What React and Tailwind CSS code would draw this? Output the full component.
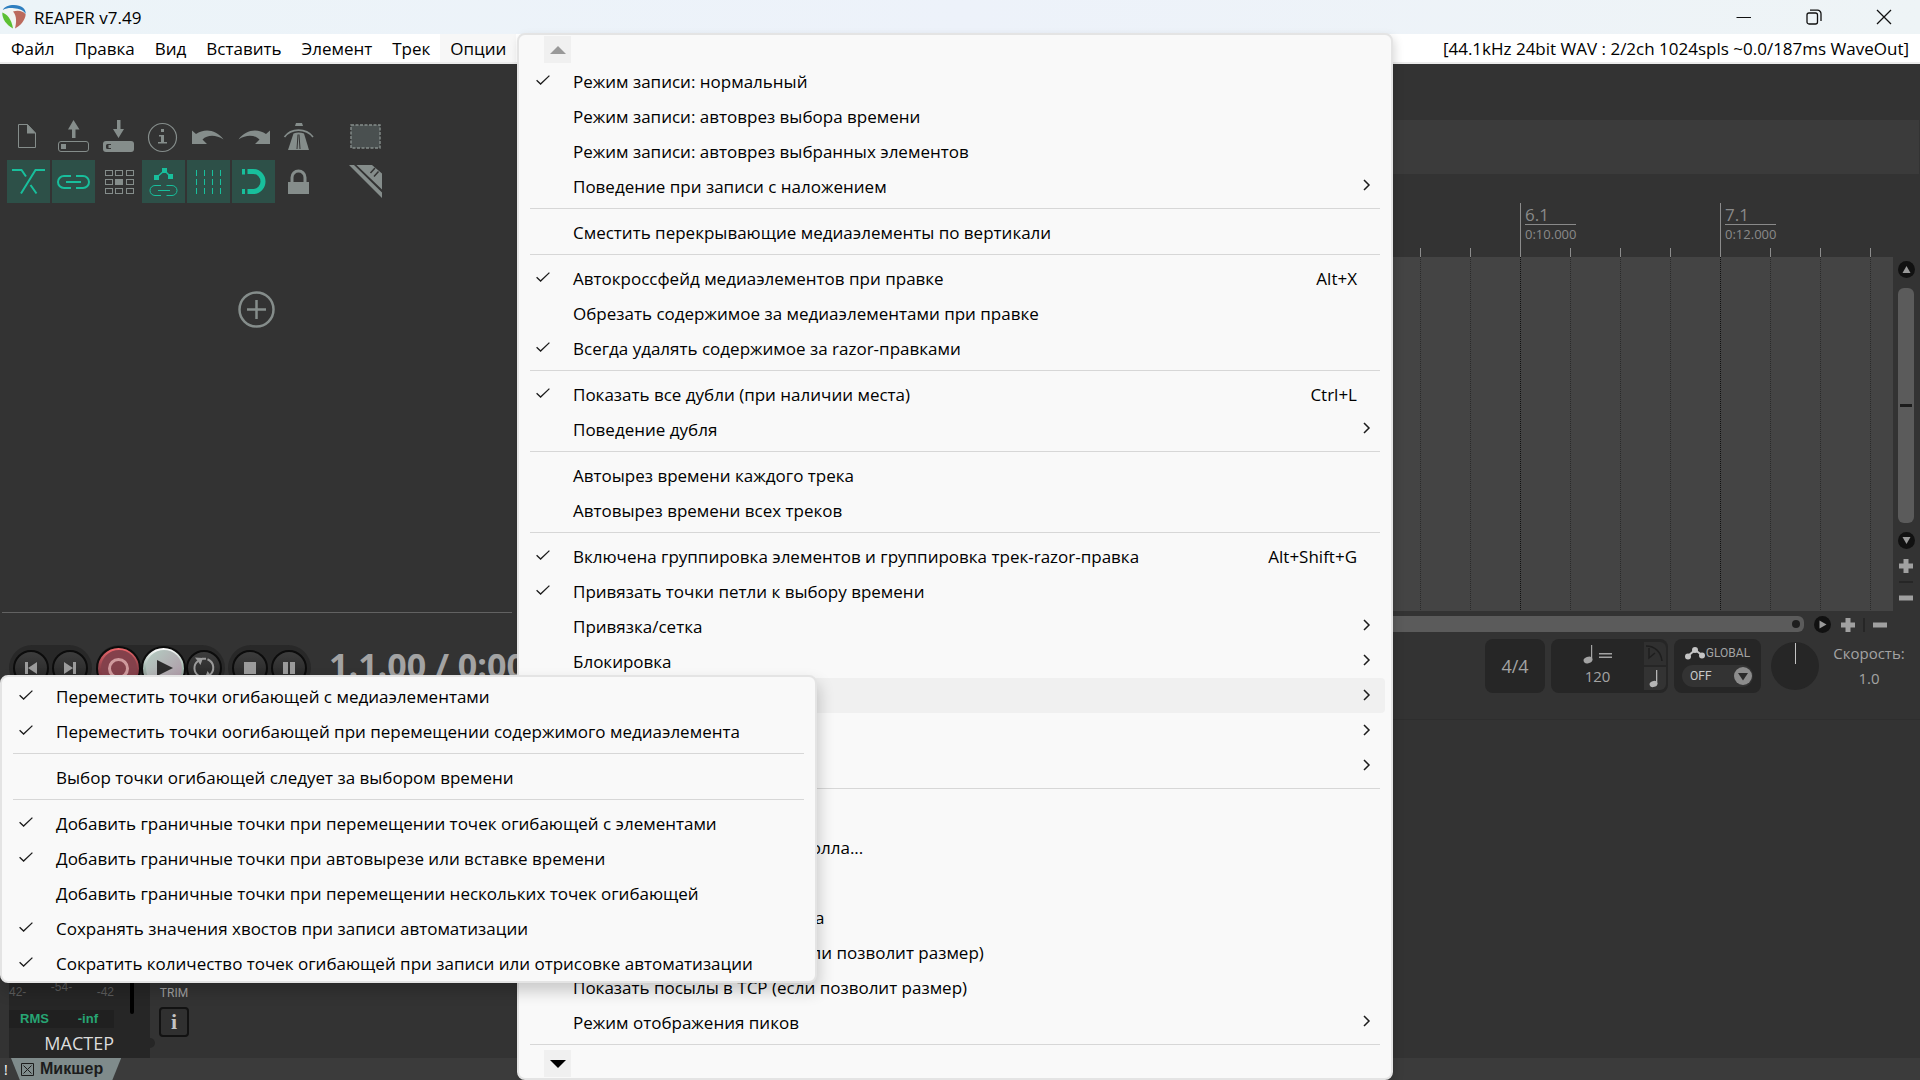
import React from "react";

const UI = "font-['Open_Sans','Noto_Sans',sans-serif]";

/* ---------- toolbar drawings (43 x 43 grid) ---------- */

const Glyph = ({ children }) => (
  <svg viewBox="0 0 43 43" className="size-[43px]" fill="none" stroke="currentColor" aria-hidden="true">
    {children}
  </svg>
);

const undoPath = "M5 15.500L9 19C17 13.500 29 14 36.500 24.500C29 19.500 20.500 19.500 15.500 24.500L20 29H5Z";
const linkHalves = "M19 16H12a6 6 0 0 0 0 12H19M24 16H31a6 6 0 0 1 0 12H24";

const toolbarTop = [
  { name: "Новый проект", art: (
    <Glyph>
      <path d="M11.500 9.500H20.500L28.500 18V32.500H11.500Z" />
      <path d="M20 9L29 18.500H20Z" fill="currentColor" stroke="none" />
    </Glyph>
  ) },
  { name: "Открыть проект", art: (
    <Glyph>
      <path d="M21.500 5L27.500 14.500H23.500V23H20V14.500H16Z" fill="currentColor" stroke="none" />
      <rect x="6.500" y="26.500" width="30" height="10" rx="2.500" />
      <rect x="9" y="29" width="5" height="5" fill="currentColor" stroke="none" />
    </Glyph>
  ) },
  { name: "Сохранить проект", art: (
    <Glyph>
      <path d="M21.500 23L27 14H23.500V5H20V14H16Z" fill="currentColor" stroke="none" />
      <rect x="6" y="26" width="31" height="11" rx="3" fill="currentColor" stroke="none" />
      <path d="M14 29H10.500Q9 29 9 30.500V32.500Q9 34 10.500 34H14V33H11.500V30H14Z" fill="#333" stroke="none" />
    </Glyph>
  ) },
  { name: "Настройки проекта", art: (
    <Glyph>
      <circle cx="20.500" cy="22.500" r="14" strokeWidth="1.200" />
      <path d="M19 14h3v3h-3zM17 20h5v7h3v1.500h-9V27h3v-5.500h-2z" fill="currentColor" stroke="none" />
    </Glyph>
  ) },
  { name: "Отменить", art: <Glyph><path d={undoPath} fill="currentColor" stroke="none" /></Glyph> },
  { name: "Повторить", art: (
    <Glyph><path d={undoPath} transform="matrix(-1 0 0 1 43 0)" fill="currentColor" stroke="none" /></Glyph>
  ) },
  { name: "Метроном", art: (
    <Glyph>
      <path d="M19 8H25L26 11H18Z" fill="currentColor" stroke="none" />
      <path d="M7.500 22C14 12.800 29 12.800 36 22" strokeWidth="1.600" />
      <path d="M16.500 18.500Q21.500 16.500 27 18.500L32 35H11Z" fill="currentColor" stroke="none" />
      <path d="M21 19.500L20 34M22 19.500L23 34" stroke="#333" />
    </Glyph>
  ) },
];

const toolbarBottom = [
  { name: "Автокроссфейд", on: true, art: (
    <Glyph>
      <path d="M5 10H14.500L19 16.500M23.500 25L29.500 33.500M38 10H28.500L14 33.500" strokeWidth="2" />
    </Glyph>
  ) },
  { name: "Группировка элементов", on: true, art: (
    <Glyph><path d={linkHalves + "M14 22H29"} strokeWidth="2" /></Glyph>
  ) },
  { name: "Ripple-правка", art: (
    <Glyph>
      {[10, 19, 28].map((y) => [8, 18, 29].map((x) => (
        <rect key={x + "-" + y} x={x + 0.5} y={y + 0.5} width="7" height="5" fill={x === 18 && y === 19 ? "currentColor" : "none"} />
      )))}
    </Glyph>
  ) },
  { name: "Перемещать огибающие", on: true, art: (
    <Glyph>
      <path d="M14.500 17.500L22.500 10.500L28.500 16.500" strokeWidth="1.500" />
      <path d="M12 15h5v5h-5zM20 8h5v5h-5zM26 14h5v5h-5z" fill="currentColor" stroke="none" />
      <path d="M19 25.500H13a5 5 0 0 0 0 10H19M24.500 25.500H30a5 5 0 0 1 0 10H24.500M16 30.500H28" />
    </Glyph>
  ) },
  { name: "Сетка", on: true, art: (
    <Glyph>
      <path d="M9.500 10v24M17.500 10v24M25.500 10v24M33.500 10v24" strokeDasharray="6 3" />
    </Glyph>
  ) },
  { name: "Привязка", on: true, art: (
    <Glyph>
      <path d="M10 9h3v5.500h-3zM10 29h3v5h-3z" fill="currentColor" stroke="none" />
      <path d="M15.500 11.500H21.500a9.500 10 0 0 1 0 20H15.500" strokeWidth="5" />
    </Glyph>
  ) },
  { name: "Блокировка", art: (
    <Glyph>
      <rect x="11" y="22" width="21" height="12" fill="currentColor" stroke="none" />
      <path d="M15 22V17.500a6.500 6.500 0 0 1 13 0V22" strokeWidth="3" />
    </Glyph>
  ) },
];

const marqueeTool = (
  <Glyph>
    <rect x="7" y="10" width="29" height="23" fill="#4a5050" strokeDasharray="3 1.500" strokeWidth="1.400" />
  </Glyph>
);

const razorTool = (
  <Glyph>
    <path d="M5 5H10L38 32.500V38ZM12.500 5H28L38 13.500V29.500Z" fill="currentColor" stroke="none" />
    <path d="M26.500 13L31 8M30 16.500L34.500 11.500" stroke="#333" strokeWidth="1.500" />
  </Glyph>
);

const ToolButton = ({ name, on, children }) => (
  <button
    type="button"
    aria-label={name}
    aria-pressed={!!on}
    className={on ? "size-[43px] bg-[#2d5048] text-[#18bf9c]" : "size-[43px] text-[#858d8b]"}
  >
    {children}
  </button>
);

/* ---------- menus ---------- */

const mainMenu = [
  { t: "Режим записи: нормальный", c: true },
  { t: "Режим записи: автоврез выбора времени" },
  { t: "Режим записи: автоврез выбранных элементов" },
  { t: "Поведение при записи с наложением", sub: true },
  null,
  { t: "Сместить перекрывающие медиаэлементы по вертикали" },
  null,
  { t: "Автокроссфейд медиаэлементов при правке", c: true, k: "Alt+X" },
  { t: "Обрезать содержимое за медиаэлементами при правке" },
  { t: "Всегда удалять содержимое за razor-правками", c: true },
  null,
  { t: "Показать все дубли (при наличии места)", c: true, k: "Ctrl+L" },
  { t: "Поведение дубля", sub: true },
  null,
  { t: "Автоырез времени каждого трека" },
  { t: "Автовырез времени всех треков" },
  null,
  { t: "Включена группировка элементов и группировка трек-razor-правка", c: true, k: "Alt+Shift+G" },
  { t: "Привязать точки петли к выбору времени", c: true },
  { t: "Привязка/сетка", sub: true },
  { t: "Блокировка", sub: true },
  { label: "Точки огибающей", sub: true, open: true },
  { label: "Автоматизация", sub: true },
  { label: "Метроном", sub: true },
  null,
  { label: "Автоскролл" },
  { t: "Параметры полного автоскролла..." },
  { label: "Плавный поиск" },
  { t: "Сделать направляющие трека" },
  { t: "Показать элементы в TCP (если позволит размер)" },
  { t: "Показать посылы в TCP (если позволит размер)" },
  { t: "Режим отображения пиков", sub: true },
  null,
];

const envelopeMenu = [
  { t: "Переместить точки огибающей с медиаэлементами", c: true },
  { t: "Переместить точки оогибающей при перемещении содержимого медиаэлемента", c: true },
  null,
  { t: "Выбор точки огибающей следует за выбором времени" },
  null,
  { t: "Добавить граничные точки при перемещении точек огибающей с элементами", c: true },
  { t: "Добавить граничные точки при автовырезе или вставке времени", c: true },
  { t: "Добавить граничные точки при перемещении нескольких точек огибающей" },
  { t: "Сохранять значения хвостов при записи автоматизации", c: true },
  { t: "Сократить количество точек огибающей при записи или отрисовке автоматизации", c: true },
];

const Check = () => (
  <svg viewBox="0 0 14 10" className="h-[10px] w-[14px]" fill="none" stroke="#1c1c1c" strokeWidth="1.300" aria-hidden="true">
    <path d="M0.600 5.200L4.600 9L13.400 0.600" />
  </svg>
);

const Chevron = () => (
  <svg viewBox="0 0 8 12" className="h-[12px] w-[8px]" fill="none" stroke="#1c1c1c" strokeWidth="1.500" aria-hidden="true">
    <path d="M1 1L6 6L1 11" />
  </svg>
);

const MenuList = ({ items }) =>
  items.map((it, i) =>
    it === null ? (
      <div key={i} role="separator" className="mx-[11px] flex h-[11px] items-center">
        <span className="h-px w-full bg-[#d7d7d7]" />
      </div>
    ) : (
      <button
        key={i}
        type="button"
        role={it.c ? "menuitemcheckbox" : "menuitem"}
        aria-checked={it.c}
        aria-label={it.label}
        className={
          it.open
            ? "mx-1.5 flex h-[35px] items-center rounded bg-[#f0f0f0] pr-[14px] pl-[11px] text-left"
            : "mx-1.5 flex h-[35px] items-center pr-[14px] pl-[11px] text-left"
        }
      >
        <span className="flex h-full w-[37px] shrink-0 items-start pt-3">{it.c && <Check />}</span>
        <span className="flex-1 pt-0.5 whitespace-nowrap">{it.t}</span>
        {it.k && <span className="pt-0.5 pr-[14px] whitespace-nowrap">{it.k}</span>}
        {it.sub && <span className="flex h-full items-start pt-[11px]"><Chevron /></span>}
      </button>
    )
  );

/* ---------- timeline ---------- */

const BEAT = 50;
const ORIGIN = 3;
const beats = Array.from({ length: 28 }, (_, i) => ({ i, x: ORIGIN + i * BEAT, bar: i % 4 === 0 }));
const FIRST_LABELLED_BEAT = 20;

const Ruler = () => (
  <div className="relative h-[83px]">
    <svg className="h-full w-full" shapeRendering="crispEdges" stroke="#8c8c8c" aria-hidden="true">
      {beats.map((b) => (
        <line key={b.i} x1={b.x} x2={b.x} y1={b.bar ? 29 : 74} y2="83" />
      ))}
    </svg>
    {beats.filter((b) => b.bar && b.i >= FIRST_LABELLED_BEAT).map((b) => (
      <div key={b.i} className="absolute top-[32px] text-[#8a8a8a]" style={{ left: b.x + 5 }}>
        <div className="border-b border-[#8a8a8a] text-[17px] leading-[18px]">{b.i / 4 + 1}.1</div>
        <div className="text-[13px] leading-[18px]">0:{String((b.i / 4) * 2).padStart(2, "0")}.000</div>
      </div>
    ))}
  </div>
);

/* ---------- scrollbars ---------- */

const RoundArrow = ({ name, d }) => (
  <button type="button" aria-label={name} className="flex size-[17px] items-center justify-center rounded-full bg-[#111]">
    <svg viewBox="0 0 9 9" className="size-[9px]" fill="#999" aria-hidden="true"><path d={d} /></svg>
  </button>
);

const Zoom = ({ name, plus }) => (
  <button type="button" aria-label={name} className="flex size-[14px] items-center justify-center">
    <svg viewBox="0 0 14 14" className="size-[14px]" stroke="#a0a0a0" strokeWidth="5" aria-hidden="true">
      <path d={plus ? "M0 7H14M7 0V14" : "M0 7H14"} />
    </svg>
  </button>
);

/* ---------- transport ---------- */

const Knob = ({ name, children }) => (
  <button type="button" aria-label={name} className="flex size-[36px] shrink-0 items-center justify-center rounded-full border-2 border-[#0c0c0c] bg-gradient-to-b from-[#3d3d3d] to-[#242424]">
    <svg viewBox="0 0 24 24" className="size-6" fill="#9b9b9b" aria-hidden="true">{children}</svg>
  </button>
);

const Transport = () => (
  <div className="flex h-[80px] items-start text-[#a3a3a3]">
    <div className="mt-[6px] ml-[9px] flex h-[46px] shrink-0 items-center gap-[3px] rounded-full bg-[#282828] px-1">
      <Knob name="В начало"><path d="M6 6h3v12H6zM18 6v12l-9-6z" /></Knob>
      <Knob name="В конец"><path d="M15 6h3v12h-3zM6 6v12l9-6z" /></Knob>
    </div>
    <div className="mt-[6px] ml-1 flex h-[46px] shrink-0 items-center rounded-full bg-[#282828] pr-[3px]">
      <button type="button" aria-label="Запись" className="flex size-[45px] items-center justify-center rounded-full border-2 border-[#0c0c0c] bg-gradient-to-b from-[#f0686c] via-[#8c4049] to-[#6b2f3c]">
        <span className="flex size-[36px] items-center justify-center rounded-full bg-[#84414b]"><span className="size-[21px] rounded-full border-3 border-[#cf9a9d]" /></span>
      </button>
      <button type="button" aria-label="Воспроизведение" className="flex size-[45px] items-center justify-center rounded-full border-2 border-[#0c0c0c] bg-gradient-to-b from-white via-[#9fb5ab] to-[#8d7f87]">
        <span className="flex size-[36px] items-center justify-center rounded-full bg-gradient-to-br from-[#b4cfc3] to-[#ad93a4]">
          <svg viewBox="0 0 16 16" className="ml-[3px] size-4" aria-hidden="true"><path d="M0 0L16 8L0 16Z" fill="#2c2c2c" /></svg>
        </span>
      </button>
      <Knob name="Повтор">
        <path d="M7 20A9 9 0 0 1 6 5M15.500 3.200A9.200 9.200 0 0 1 17 19.500M10 2.800H14" fill="none" stroke="#9b9b9b" strokeWidth="2" />
        <path d="M3 1.500L11 2L8.500 9ZM21 22.500L13 22L15.500 15Z" />
      </Knob>
    </div>
    <div className="mt-[6px] ml-[3px] flex h-[46px] shrink-0 items-center gap-[3px] rounded-full bg-[#282828] px-1">
      <Knob name="Стоп"><path d="M6 6h12v12H6z" /></Knob>
      <Knob name="Пауза"><path d="M6 6h5v12H6zM13 6h5v12h-5z" /></Knob>
    </div>
    <div className="mt-[3px] ml-[18px] text-[34px] leading-[46px] font-bold whitespace-nowrap">1.1.00 / 0:00.000</div>
    <div className="flex-1" />
    <div className="flex items-center gap-1.5 pr-[13px]">
      <button type="button" className="h-[54px] w-[60px] rounded-lg bg-[#262626] text-[18px]">4/4</button>
      <div className="flex h-[54px] w-[117px] rounded-lg bg-[#262626] pr-[2px]">
        <div className="flex flex-1 flex-col items-center pt-[5px]">
          <svg viewBox="0 0 30 20" className="h-[20px] w-[30px]" fill="#a3a3a3" aria-hidden="true">
            <ellipse cx="5" cy="16" rx="4.500" ry="3.200" transform="rotate(-20 5 16)" />
            <path d="M8 1h1.200v15H8zM16 9h13v1.400H16zM16 12.500h13v1.400H16z" />
          </svg>
          <label className="sr-only" htmlFor="bpm">Темп</label>
          <input id="bpm" defaultValue="120" className="w-12 bg-transparent text-center text-[15px] leading-[24px] outline-none" />
        </div>
        <div className="flex w-[22px] flex-col gap-[2px] pt-[3px]">
          <button type="button" aria-label="Огибающая темпа" className="h-[23px] rounded-tr-md bg-[#303030]">
            <svg viewBox="0 0 22 23" className="h-[23px] w-[22px]" fill="none" stroke="#1e1e1e" strokeWidth="1.500" aria-hidden="true"><path d="M2 4C11 4 17 10 18 19M5 6V16L11 11" /></svg>
          </button>
          <button type="button" aria-label="Доля" className="h-[23px] rounded-br-md bg-[#333]">
            <svg viewBox="0 0 22 23" className="h-[23px] w-[22px]" fill="#b5b5b5" aria-hidden="true">
              <ellipse cx="9.500" cy="17" rx="4" ry="3" transform="rotate(-20 9.500 17)" />
              <path d="M12 3h1.300v14H12z" />
            </svg>
          </button>
        </div>
      </div>
      <div className="flex h-[54px] w-[87px] flex-col items-center gap-[3px] rounded-lg bg-[#262626] pt-[5px] font-['Roboto',sans-serif] text-[12px]">
        <div className="flex h-[18px] items-center gap-px">
          <svg viewBox="0 0 20 14" className="h-[14px] w-[20px]" fill="#c4c4c4" stroke="#c4c4c4" strokeWidth="2" aria-hidden="true">
            <path d="M3 10L10 4L17 9" fill="none" />
            <circle cx="3" cy="10.500" r="2" /><circle cx="10" cy="4" r="2" /><circle cx="17" cy="9.500" r="2" />
          </svg>
          GLOBAL
        </div>
        <button type="button" className="flex h-[22px] w-[71px] items-center justify-between rounded-full bg-[#333] pr-px pl-2 text-[#c9c9c9]">
          OFF
          <svg viewBox="0 0 18 18" className="size-[18px]" aria-hidden="true"><circle cx="9" cy="9" r="9" fill="#8c8c8c" /><path d="M4 6H14L9 13.500Z" fill="#2a2a2a" /></svg>
        </button>
      </div>
      <div className="ml-1 flex size-[48px] justify-center rounded-full bg-[#262626] pt-px"><span className="h-[21px] w-px bg-[#c4c4c4]" /></div>
      <div className="ml-1.5 flex w-[76px] flex-col items-center text-[15px] leading-[25px] whitespace-nowrap">
        <span>Скорость:</span>
        <span>1.0</span>
      </div>
    </div>
  </div>
);

/* ---------- mixer ---------- */

const Mixer = () => (
  <section aria-label="Микшер" className="flex h-[339px] border-t border-[#2e2e2e] pl-[9px]">
    <div className="flex w-[141px] flex-col justify-end bg-[#262626]">
      <div className="flex flex-1 items-end font-['Liberation_Sans',sans-serif] text-[12px] leading-[16px] text-[#5c5c5c]">
        <div className="flex w-[105px] items-end justify-between pb-[14px]">
          <span>42-</span><span className="pb-[5px]">-54-</span><span>-42</span>
        </div>
        <span className="ml-4 h-[300px] w-1 rounded-b bg-black" />
      </div>
      <div className="-mt-1 flex h-[18px] w-[105px] items-center justify-between bg-[#202020] pr-4 pl-[11px] font-['Liberation_Sans',sans-serif] text-[13px] font-bold text-[#27a574]">
        <span>RMS</span><span>-inf</span>
      </div>
      <div className="h-[30px] w-[105px] text-right text-[18px] leading-[30px] text-[#dcdcdc]">МАСТЕР</div>
    </div>
    <span className="mb-[10px] h-[10px] w-[5px] self-end rounded-r-full bg-[#262626]" />
    <div className="flex flex-col items-center justify-end pb-[21px] pl-1">
      <div className="pb-[6px] font-['Roboto',sans-serif] text-[12px] leading-[16px] text-[#a0a0a0]">TRIM</div>
      <button type="button" aria-label="Маршрутизация" className="h-[30px] w-[30px] rounded border-2 border-[#121212] bg-[#303030] font-['Liberation_Serif',serif] text-[22px] leading-[24px] font-bold text-[#c4c4c4]">i</button>
    </div>
  </section>
);

/* ---------- window ---------- */

const Logo = () => (
  <svg viewBox="0 0 24 24" className="size-6" aria-hidden="true">
    <path d="M.2 8C.5 3 4.500 0 12 0C19.500 0 23.500 3 23.800 8C24 14 19 20.500 12 24C5 20.500 0 14 .2 8Z" fill="#f1f5f3" />
    <path d="M.8 5C2.500 1.800 6.500 0 12 0C19.500 0 23.800 3.500 23.800 9C21.500 5 17 3.600 12 3.200C8 2.900 4.500 3 .8 5Z" fill="#2e7fc0" />
    <path d="M.3 7.500C4.500 9 9.500 13.500 11 23.500C4.500 20 0 14 .3 7.500Z" fill="#5cc032" />
    <path d="M11 6.500C16 5 21.500 6 23.700 9.500C23 15.500 18.500 20.800 13 23.400C14.500 17.500 15 11 11 6.500Z" fill="#bb6a5d" />
  </svg>
);

const menuBar = ["Файл", "Правка", "Вид", "Вставить", "Элемент", "Трек"];

export default function App() {
  return (
    <div className={UI + " relative flex min-h-screen flex-col overflow-hidden bg-[#333] text-black"}>
      <header className="flex h-[34px] items-center justify-between bg-gradient-to-r from-[#ecf4f8] via-[#edf2fa] to-[#eef4f6] pl-[2px]">
        <div className="flex items-center gap-2">
          <Logo />
          <h1 className="pt-0.5 text-[17px] leading-6">REAPER v7.49</h1>
        </div>
        <div className="flex items-center gap-[54px] pr-[28px]">
          <button type="button" aria-label="Свернуть">
            <svg viewBox="0 0 16 16" className="size-4" stroke="#111" aria-hidden="true"><path d="M0.500 8.500H15" /></svg>
          </button>
          <button type="button" aria-label="Свернуть в окно">
            <svg viewBox="0 0 16 16" className="size-4" fill="none" stroke="#111" strokeWidth="1.300" aria-hidden="true">
              <rect x="1" y="4" width="10.500" height="11" rx="2" />
              <path d="M4 1.200H11.500a3.500 3.500 0 0 1 3.500 3.500V12" />
            </svg>
          </button>
          <button type="button" aria-label="Закрыть">
            <svg viewBox="0 0 16 16" className="size-4" stroke="#111" strokeWidth="1.300" aria-hidden="true"><path d="M1 1L15 15M15 1L1 15" /></svg>
          </button>
        </div>
      </header>

      <nav className="flex h-[30px] items-stretch justify-between border-b-2 border-[#ececec] bg-white text-[17px] leading-[30px]">
        <div className="flex pl-px">
          {menuBar.map((m) => (
            <button key={m} type="button" className="px-[10px]">{m}</button>
          ))}
          <button type="button" aria-expanded="true" className="bg-[#f7f7f7] px-[10px]">Опции</button>
        </div>
        <span className="pr-[11px]">[44.1kHz 24bit WAV : 2/2ch 1024spls ~0.0/187ms WaveOut]</span>
      </nav>

      <main className="flex flex-1 flex-col">
        <div className="flex flex-1">
          <aside className="flex w-[517px] shrink-0 flex-col">
            <div className="flex gap-[24px] pt-[51px] pl-[7px]">
              <div className="flex flex-col gap-[2px]">
                <div className="flex gap-[2px]">
                  {toolbarTop.map((t) => <ToolButton key={t.name} name={t.name}>{t.art}</ToolButton>)}
                </div>
                <div className="flex gap-[2px]">
                  {toolbarBottom.map((t) => <ToolButton key={t.name} name={t.name} on={t.on}>{t.art}</ToolButton>)}
                </div>
              </div>
              <div className="flex flex-col gap-[2px]">
                <ToolButton name="Выделение рамкой">{marqueeTool}</ToolButton>
                <ToolButton name="Razor-правка">{razorTool}</ToolButton>
              </div>
            </div>
            <button type="button" aria-label="Добавить трек" className="mt-[87px] ml-[237px] size-[38px] text-[#858d8b]">
              <svg viewBox="0 0 38 38" className="size-[38px]" fill="none" stroke="currentColor" aria-hidden="true">
                <circle cx="19.500" cy="19.500" r="17" strokeWidth="2.500" />
                <path d="M10 19.500H29M19.500 10V29" strokeWidth="2.500" />
              </svg>
            </button>
            <div className="flex-1" />
            <div className="mr-[5px] mb-[26px] ml-[2px] h-px bg-[#626262]" />
          </aside>

          <div className="flex min-w-0 flex-1 flex-col">
            <div className="mt-[56px] mr-px h-[54px] bg-[#3b3b3b]" />
            <div className="flex flex-1">
              <div className="flex min-w-0 flex-1 flex-col">
                <Ruler />
                <div className="flex min-h-[300px] flex-1 bg-[#444]">
                  <svg className="h-[354px] w-full" shapeRendering="crispEdges" aria-hidden="true">
                    {beats.map((b) => (
                      <line key={b.i} x1={b.x} x2={b.x} y1="0" y2="100%" stroke={b.bar ? "#111" : "#2a2a2a"} strokeDasharray="1 1" />
                    ))}
                  </svg>
                </div>
              </div>
              <div className="flex w-[27px] flex-col items-center pt-[87px] pr-px">
                <RoundArrow name="Вверх" d="M4.500 1L8.500 8H.500Z" />
                <div className="mt-[10px] flex w-4 flex-1 items-center justify-center rounded-md bg-[#5b5b5b]">
                  <span className="h-[3px] w-3 bg-[#1c1c1c]" />
                </div>
                <div className="flex flex-col items-center pt-[9px]">
                  <RoundArrow name="Вниз" d="M4.500 8L8.500 1H.500Z" />
                  <div className="flex flex-col items-center gap-[8px] pt-[10px] pb-[6px]">
                    <Zoom name="Увеличить по вертикали" plus />
                    <span className="h-[2px] w-[14px] bg-[#262626]" />
                    <Zoom name="Уменьшить по вертикали" />
                  </div>
                </div>
              </div>
            </div>
            <div className="flex h-[28px] items-start pt-[5px] pr-[33px]">
              <div className="flex h-4 flex-1 items-center justify-end rounded-r-md bg-[#5b5b5b] pr-1">
                <span className="size-2 rounded-full bg-[#1e1e1e]" />
              </div>
              <div className="flex items-center pl-[10px]">
                <RoundArrow name="Вправо" d="M1.500 .500L8.500 4.500L1.500 8.500Z" />
                <div className="flex items-center gap-[8px] pl-[10px]">
                  <Zoom name="Увеличить по горизонтали" plus />
                  <span className="h-[14px] w-[2px] bg-[#262626]" />
                  <Zoom name="Уменьшить по горизонтали" />
                </div>
              </div>
            </div>
          </div>
        </div>
        <Transport />
        <Mixer />
      </main>

      <footer className="flex h-[22px] items-center bg-[#3b3b3b]">
        <span className="w-[11px] pl-1 text-[14px] text-white">!</span>
        <button type="button" className="flex h-full items-center gap-1.5 bg-[#7f8b8b] pr-[18px] pl-[10px] font-['Liberation_Sans',sans-serif] text-[16px] font-bold text-[#1c1c1c] [clip-path:polygon(0_0,100%_0,92%_100%,8%_100%)]">
          <svg viewBox="0 0 13 13" className="size-[13px]" fill="none" stroke="#1c1c1c" aria-hidden="true"><path d="M.5 .5h12v12H.5zM2.500 2.500l8 8M10.500 2.500l-8 8" /></svg>
          Микшер
        </button>
      </footer>

      <div role="menu" aria-label="Опции" className="absolute top-[33px] left-[517px] flex w-[876px] flex-col rounded-lg border-2 border-[#e4e4e4] bg-[#f9f9f9] py-px text-[17px] leading-6 shadow-[2px_4px_10px_rgba(0,0,0,0.15)]">
        <button type="button" aria-label="Прокрутить вверх" className="ml-[25px] flex size-[27px] items-center justify-center bg-[#f0f0f0]">
          <svg viewBox="0 0 16 8" className="h-2 w-4" fill="#999" aria-hidden="true"><path d="M8 0L16 8H0Z" /></svg>
        </button>
        <MenuList items={mainMenu} />
        <button type="button" aria-label="Прокрутить вниз" className="ml-[25px] flex size-[27px] items-center justify-center bg-[#f0f0f0]">
          <svg viewBox="0 0 16 8" className="h-2 w-4" fill="#000" aria-hidden="true"><path d="M8 8L16 0H0Z" /></svg>
        </button>
      </div>

      <div role="menu" aria-label="Точки огибающей" className="absolute top-[675px] left-0 flex w-[817px] flex-col rounded-lg border-2 border-[#e4e4e4] bg-[#f9f9f9] py-px text-[17px] leading-6 shadow-[2px_8px_16px_rgba(0,0,0,0.2)]">
        <MenuList items={envelopeMenu} />
      </div>
    </div>
  );
}
